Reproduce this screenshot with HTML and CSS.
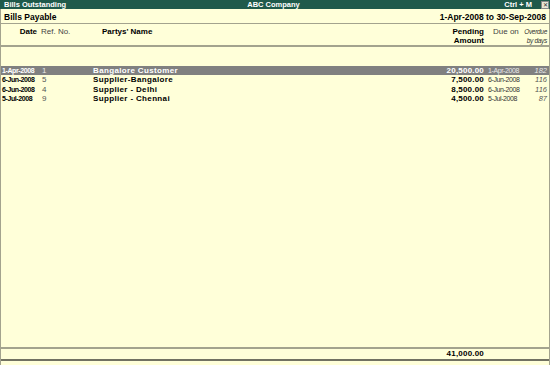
FILE: index.html
```html
<!DOCTYPE html>
<html lang="en">
<head>
  <meta charset="UTF-8" />
  <title>Bills Outstanding</title>
  <link rel="stylesheet" href="styles.css">
</head>
<body>
  <div class="titlebar">
    <span class="tb-left">Bills Outstanding</span>
    <span class="tb-mid">ABC Company</span>
    <span class="tb-right">Ctrl + M <span class="close">&#x2715;</span></span>
  </div>

  <div class="report">
    <div class="report-head">
      <span>Bills Payable</span>
      <span>1-Apr-2008 to 30-Sep-2008</span>
    </div>

    <div class="grid col-head">
      <div class="c-date bold">Date</div>
      <div class="c-ref">Ref. No.</div>
      <div class="c-name bold">Partys' Name</div>
      <div class="c-amt bold">Pending<br>Amount</div>
      <div class="c-due">Due on</div>
      <div class="c-over">Overdue<br>by days</div>
    </div>

    <div class="rows">
      <div class="grid row selected">
        <div class="c-date">1-Apr-2008</div>
        <div class="c-ref">1</div>
        <div class="c-name">Bangalore Customer</div>
        <div class="c-amt">20,500.00</div>
        <div class="c-due">1-Apr-2008</div>
        <div class="c-over">182</div>
      </div>
      <div class="grid row">
        <div class="c-date">6-Jun-2008</div>
        <div class="c-ref">5</div>
        <div class="c-name">Supplier-Bangalore</div>
        <div class="c-amt">7,500.00</div>
        <div class="c-due">6-Jun-2008</div>
        <div class="c-over">116</div>
      </div>
      <div class="grid row">
        <div class="c-date">6-Jun-2008</div>
        <div class="c-ref">4</div>
        <div class="c-name">Supplier - Delhi</div>
        <div class="c-amt">8,500.00</div>
        <div class="c-due">6-Jun-2008</div>
        <div class="c-over">116</div>
      </div>
      <div class="grid row">
        <div class="c-date">5-Jul-2008</div>
        <div class="c-ref">9</div>
        <div class="c-name">Supplier - Chennai</div>
        <div class="c-amt">4,500.00</div>
        <div class="c-due">5-Jul-2008</div>
        <div class="c-over">87</div>
      </div>
    </div>

    <div class="grid total">
      <div></div><div></div><div></div>
      <div class="c-amt">41,000.00</div>
      <div></div><div></div>
    </div>
  </div>
</body>
</html>
```

FILE: styles.css
```css
:root {
  --green: #1f5a4b;
  --cream: #ffffd9;
  --line: #a3a38e;
  --dark-line: #727262;
  --sel: #808080;
}
* { box-sizing: border-box; }
html, body {
  margin: 0;
  padding: 0;
  height: 365px;
  overflow: hidden;
  background: var(--cream);
  color: #000;
  font-family: 'Liberation Sans', Arial, sans-serif;
}
body {
  display: flex;
  flex-direction: column;
}

.titlebar {
  height: 9px;
  background: var(--green);
  color: #fff;
  font-size: 7.5px;
  font-weight: bold;
  line-height: 9px;
  display: grid;
  grid-template-columns: 1fr auto 1fr;
  padding: 0 1px 0 4px;
}
.tb-mid { padding-right: 6px; }
.tb-right {
  justify-self: end;
  display: flex;
  align-items: center;
  gap: 9px;
}
.close {
  width: 8px;
  height: 8px;
  background: #e6e6d4;
  color: #333;
  border: 1px solid #888;
  font-size: 6px;
  line-height: 6px;
  text-align: center;
  font-weight: normal;
}

.report {
  flex: 1;
  display: flex;
  flex-direction: column;
  border-left: 1px solid var(--line);
  border-right: 1px solid var(--line);
}

.report-head {
  height: 15px;
  display: flex;
  justify-content: space-between;
  align-items: center;
  padding: 1px 3px 0 3px;
  font-size: 8.5px;
  font-weight: bold;
  border-bottom: 1px solid var(--line);
}

.grid {
  display: grid;
  grid-template-columns: 37px 55px 1fr 80px 40px 25px;
  white-space: nowrap;
}
.c-date { text-align: right; padding-right: 1px; }
.c-ref { padding-left: 3px; color: #333; }
.c-amt { text-align: right; }
.c-due { padding-left: 4px; }
.c-over { text-align: right; padding-right: 2px; font-style: italic; }
.bold { font-weight: bold; }

.col-head {
  height: 23px;
  padding-top: 3px;
  font-size: 8px;
  line-height: 9px;
  border-bottom: 2px solid var(--line);
}
.col-head .c-name { padding-left: 9px; }
.col-head .c-ref { color: #444; }
.col-head .c-due { color: #444; padding-left: 9px; }
.col-head .c-over {
  font-size: 6.5px;
  letter-spacing: -0.3px;
  color: #333;
}

.rows {
  flex: 1;
  padding-top: 19px;
}
.row {
  height: 9.4px;
  line-height: 9.4px;
  font-size: 8px;
}
.row .c-date {
  text-align: left;
  padding-left: 1px;
  font-size: 7px;
  font-weight: bold;
  letter-spacing: -0.4px;
}
.row .c-ref { font-size: 8px; color: #555; padding-left: 4px; }
.row .c-name { font-weight: bold; letter-spacing: 0.35px; }
.row .c-amt { font-weight: bold; letter-spacing: 0.2px; }
.row .c-due {
  font-size: 7px;
  letter-spacing: -0.4px;
  color: #333;
}
.row .c-over { font-size: 7.5px; color: #555; }
.row.selected { background: var(--sel); }
.row.selected div { color: #fff; }
.row.selected .c-ref,
.row.selected .c-due,
.row.selected .c-over { color: #e8e8e8; }

.total {
  height: 18px;
  border-top: 2px solid var(--line);
  font-size: 8px;
  font-weight: bold;
  line-height: 9px;
  letter-spacing: 0.2px;
  position: relative;
}
.total::after {
  content: "";
  position: absolute;
  left: 0;
  right: 0;
  top: 10px;
  height: 6px;
  border-top: 2px solid var(--dark-line);
  border-bottom: 1px solid var(--line);
}
```
